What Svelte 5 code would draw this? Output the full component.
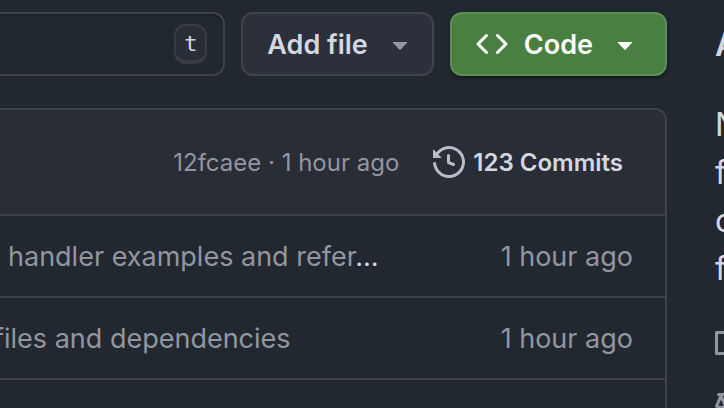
<script lang="ts">
	interface FileRow {
		message: string;
		truncated: boolean;
		clipped: boolean;
		age: string;
	}

	const rows: FileRow[] = [
		{ message: 'handler examples and refer', truncated: true, clipped: false, age: '1 hour ago' },
		{ message: 'files and dependencies', truncated: false, clipped: true, age: '1 hour ago' }
	];

	const about = ['N', 'f', 'c', 'f'];

	let query = $state('');
</script>

{#snippet caret()}
	<svg class="icon caret" viewBox="0 0 16 16" aria-hidden="true">
		<path d="m4.427 7.427 3.396 3.396a.25.25 0 0 0 .354 0l3.396-3.396A.25.25 0 0 0 11.396 7H4.604a.25.25 0 0 0-.177.427Z" />
	</svg>
{/snippet}

<div class="page">
	<main class="main">
		<div class="toolbar">
			<label class="search">
				<input type="text" aria-label="t" bind:value={query} />
				<kbd>t</kbd>
			</label>
			<button class="btn" type="button">
				Add file
				{@render caret()}
			</button>
			<button class="btn primary" type="button">
				<svg class="icon" viewBox="0 0 16 16" aria-hidden="true">
					<path d="m11.28 3.22 4.25 4.25a.75.75 0 0 1 0 1.06l-4.25 4.25a.749.749 0 0 1-1.275-.326.749.749 0 0 1 .215-.734L13.94 8l-3.72-3.72a.749.749 0 0 1 .326-1.275.749.749 0 0 1 .734.215Zm-6.56 0a.751.751 0 0 1 1.042.018.751.751 0 0 1 .018 1.042L2.06 8l3.72 3.72a.749.749 0 0 1-.326 1.275.749.749 0 0 1-.734-.215L.47 8.53a.75.75 0 0 1 0-1.06Z" />
				</svg>
				Code
				{@render caret()}
			</button>
		</div>

		<section class="files">
			<div class="latest">
				<span class="hash"><a href="#commit">12fcaee</a> · 1 hour ago</span>
				<a class="commits" href="#commits">
					<svg class="icon" viewBox="0 0 16 16" aria-hidden="true">
						<path d="m.427 1.927 1.215 1.215a8.002 8.002 0 1 1-1.6 5.685.75.75 0 1 1 1.493-.154 6.5 6.5 0 1 0 1.18-4.458l1.358 1.358A.25.25 0 0 1 3.896 6H.25A.25.25 0 0 1 0 5.75V2.104a.25.25 0 0 1 .427-.177ZM7.75 4a.75.75 0 0 1 .75.75v2.992l2.028.812a.75.75 0 0 1-.557 1.392l-2.5-1A.751.751 0 0 1 7 8.25v-3.5A.75.75 0 0 1 7.75 4Z" />
					</svg>
					123 Commits
				</a>
			</div>
			<table>
				<tbody>
					{#each rows as row}
						<tr>
							<td class="message" class:clipped={row.clipped}>
								<a href="#message">{row.message}</a>{#if row.truncated}<span class="dots">…</span>{/if}
							</td>
							<td class="age">{row.age}</td>
						</tr>
					{/each}
				</tbody>
			</table>
		</section>
	</main>

	<aside class="sidebar">
		<h2>A</h2>
		<p>
			{#each about as line}
				<span>{line}</span>
			{/each}
		</p>
		<svg class="icon" viewBox="0 0 16 16" aria-hidden="true">
			<path d="M0 1.75A.75.75 0 0 1 .75 1h4.253c1.227 0 2.317.59 3 1.501A3.743 3.743 0 0 1 11.006 1h4.245a.75.75 0 0 1 .75.75v10.5a.75.75 0 0 1-.75.75h-4.507a2.25 2.25 0 0 0-1.591.659l-.622.621a.75.75 0 0 1-1.06 0l-.622-.621A2.25 2.25 0 0 0 5.258 13H.75a.75.75 0 0 1-.75-.75Zm7.251 10.324.004-5.073-.002-2.253A2.25 2.25 0 0 0 5.003 2.5H1.5v9h3.757a3.75 3.75 0 0 1 1.994.574ZM8.755 4.75l-.004 7.322a3.752 3.752 0 0 1 1.992-.572H14.5v-9h-3.495a2.25 2.25 0 0 0-2.25 2.25Z" />
		</svg>
		<svg class="icon" viewBox="0 0 16 16" aria-hidden="true">
			<path d="M8.75.75V2h.985c.304 0 .603.08.867.231l1.29.736c.038.022.08.033.124.033h2.234a.75.75 0 0 1 0 1.5h-.427l2.111 4.692a.75.75 0 0 1-.154.838l-.53-.53.529.531-.001.002-.002.002-.006.006-.016.015-.045.04c-.21.176-.441.327-.686.45C14.556 10.78 13.88 11 13 11a4.498 4.498 0 0 1-2.023-.454 3.544 3.544 0 0 1-.686-.45l-.045-.04-.016-.015-.006-.006-.004-.004v-.001a.75.75 0 0 1-.154-.838L12.178 4.5h-.162c-.305 0-.604-.079-.868-.231l-1.29-.736a.245.245 0 0 0-.124-.033H8.75V13h2.5a.75.75 0 0 1 0 1.5h-6.5a.75.75 0 0 1 0-1.5h2.5V3.5h-.984a.245.245 0 0 0-.124.033l-1.289.737c-.265.15-.564.23-.869.23h-.162l2.112 4.692a.75.75 0 0 1-.154.838l-.53-.53.529.531-.001.002-.002.002-.006.006-.016.015-.045.04c-.21.176-.441.327-.686.45C4.556 10.78 3.88 11 3 11a4.498 4.498 0 0 1-2.023-.454 3.544 3.544 0 0 1-.686-.45l-.045-.04-.016-.015-.006-.006-.004-.004v-.001a.75.75 0 0 1-.154-.838L2.178 4.5H1.75a.75.75 0 0 1 0-1.5h2.234a.249.249 0 0 0 .125-.033l1.288-.737c.265-.15.564-.23.869-.23h.984V.75a.75.75 0 0 1 1.5 0Zm2.945 8.477c.285.135.718.273 1.305.273s1.02-.138 1.305-.273L13 6.327Zm-10 0c.285.135.718.273 1.305.273s1.02-.138 1.305-.273L3 6.327Z" />
		</svg>
	</aside>
</div>

<style>
	:global(body) {
		margin: 0;
		background: #222830;
	}

	.page {
		display: grid;
		grid-template-columns: minmax(0, 1fr) 9px;
		column-gap: 48px;
		height: 100vh;
		box-sizing: border-box;
		padding-top: 12px;
		overflow: hidden;
		color: #d3d7e0;
		font-family: Inter, 'Liberation Sans', sans-serif;
		font-size: 27px;
	}

	a {
		color: inherit;
		text-decoration: none;
	}

	.main {
		display: flex;
		flex-direction: column;
		gap: 32px;
	}

	.icon {
		display: block;
		flex: none;
		width: 32px;
		height: 32px;
		fill: currentColor;
	}

	.toolbar {
		display: flex;
		gap: 16px;
		height: 64px;
	}

	.search {
		display: flex;
		flex: 1;
		align-items: center;
		min-width: 0;
		box-sizing: border-box;
		padding-right: 16px;
		border: 2px solid #3f424a;
		border-left: 0;
		border-radius: 0 12px 12px 0;
		box-shadow: inset 0 2px 0 #1b1f27;
	}

	.search input {
		flex: 1;
		min-width: 0;
		border: 0;
		outline: 0;
		background: transparent;
		color: inherit;
		font: inherit;
	}

	kbd {
		box-sizing: border-box;
		width: 33px;
		height: 40px;
		border: 2px solid #383c45;
		border-bottom-width: 4px;
		border-radius: 12px;
		background: #292d36;
		font-family: 'DejaVu Sans Mono', monospace;
		font-size: 22px;
		line-height: 36px;
		text-align: center;
	}

	.btn {
		display: flex;
		align-items: center;
		gap: 16px;
		box-sizing: border-box;
		padding: 0 16px 0 24px;
		border: 2px solid #3f434c;
		border-radius: 12px;
		background: #2b303a;
		color: #d3d7e0;
		font: inherit;
		font-weight: 600;
		white-space: nowrap;
	}

	.btn .caret {
		color: #9396a0;
	}

	.primary {
		padding-right: 24px;
		border-color: #5b8f57;
		background: #4a7f42;
		box-shadow: 0 2px 3px #14181f;
		color: #fff;
	}

	.primary .caret {
		color: #fff;
	}

	.files {
		flex: 1;
		border: 2px solid #3f424a;
		border-bottom: 0;
		border-left: 0;
		border-radius: 0 12px 0 0;
		overflow: hidden;
	}

	.latest {
		display: flex;
		align-items: center;
		justify-content: flex-end;
		gap: 34px;
		height: 104px;
		padding-right: 42px;
		border-bottom: 2px solid #3f424a;
		background: #292d36;
		font-size: 24px;
		white-space: nowrap;
	}

	.hash,
	.age,
	.message {
		color: #9396a0;
	}

	.commits {
		display: flex;
		align-items: center;
		gap: 8px;
		font-weight: 600;
	}

	.commits .icon {
		color: #b7bdc8;
	}

	table {
		width: 100%;
		border-collapse: separate;
		border-spacing: 0;
	}

	td {
		height: 80px;
		padding: 0;
		border-bottom: 2px solid #3f424a;
		white-space: nowrap;
	}

	.message {
		padding-left: 8px;
	}

	.message.clipped {
		padding-left: 0;
		text-indent: -6px;
	}

	.dots {
		color: #d3d7e0;
	}

	.age {
		padding-right: 32px;
		text-align: right;
	}

	.sidebar {
		font-size: 32px;
		line-height: 48px;
	}

	h2 {
		margin: 9px 0 32px;
		font-size: 32px;
		font-weight: 600;
		line-height: 48px;
	}

	p {
		margin: 0 0 36px;
	}

	p span {
		display: block;
	}

	.sidebar .icon {
		margin-bottom: 26px;
		color: #9396a0;
	}
</style>
